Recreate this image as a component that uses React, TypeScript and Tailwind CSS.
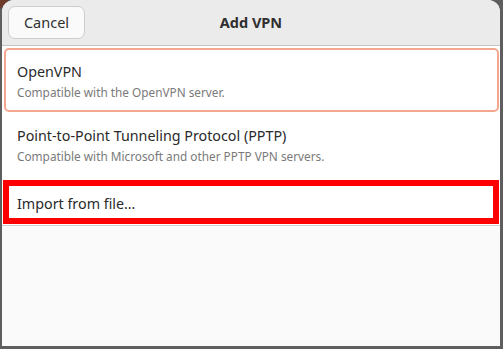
import React from "react";

const font = { fontFamily: '"Noto Sans", "Open Sans", sans-serif' };

const App = () => {
  return (
    <div
      className="w-[503px] h-[349px] bg-[#5e5e5e] pl-[2px] pr-[3px] pb-[3px] bg-[linear-gradient(135deg,#6e3b2b_0px,#6e3b2b_6px,#5e5e5e_7px)]"
      style={font}
    >
      <div className="h-full flex flex-col bg-[#fafafa] rounded-t-[12px] overflow-hidden">
        {/* header */}
        <div className="h-[46px] shrink-0 grid grid-cols-[1fr_auto_1fr] items-center bg-[#ebebeb] border-b border-[#c6c6c6] px-[6px]">
          <div>
            <button
              type="button"
              className="h-[33px] w-[77px] rounded-[7px] bg-[#fafafa] border border-[#cdcdcd] text-[14.5px] text-[#303030]"
            >
              Cancel
            </button>
          </div>
          <div className="text-[14.5px] font-bold text-[#303030]">Add VPN</div>
          <div />
        </div>

        {/* list */}
        <div className="bg-white border-b border-[#d0d0d0] pt-[2px] pl-[2px] pr-[1px]">
          <div className="h-[64px] border-2 border-[#f4a790] rounded-[5px] flex flex-col justify-center pl-[11px] pt-[2px]">
            <div className="text-[14.3px] leading-[20px] text-[#2a2a2a]">OpenVPN</div>
            <div className="text-[11.8px] leading-[18px] mt-[1px] text-[#7a7a7a]">
              Compatible with the OpenVPN server.
            </div>
          </div>
          <div className="h-[65px] flex flex-col justify-center pl-[13px] pt-[2px]">
            <div className="text-[14.3px] leading-[20px] text-[#2a2a2a]">
              Point-to-Point Tunneling Protocol (PPTP)
            </div>
            <div className="text-[11.8px] leading-[18px] mt-[1px] text-[#7a7a7a]">
              Compatible with Microsoft and other PPTP VPN servers.
            </div>
          </div>
          <div className="h-[48px] pt-[3px] pb-[1px] -ml-[1px]">
            <div className="h-full border-[6px] border-[#ff0000] flex items-center pl-[8px] pt-[4px]">
              <span className="text-[14.3px] leading-[20px] text-[#2a2a2a]">Import from file…</span>
            </div>
          </div>
        </div>

        <div className="flex-1 bg-[#fafafa]" />
      </div>
    </div>
  );
};

export default App;
